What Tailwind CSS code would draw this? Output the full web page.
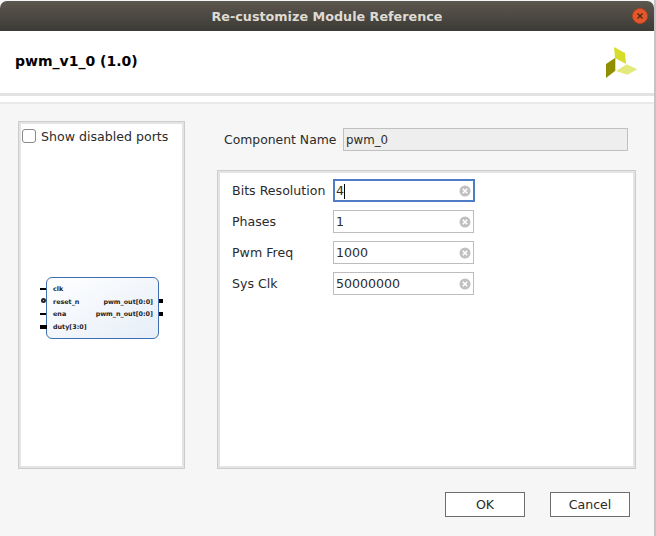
<!DOCTYPE html>
<html lang="en">
  <head>
    <meta charset="UTF-8" />
    <script src="https://cdn.jsdelivr.net/npm/@tailwindcss/browser@4"></script>
    <title>Re-customize Module Reference</title>
  </head>
  <body class="bg-white font-['DejaVu_Sans',sans-serif]">
    <div class="w-[656px] h-[536px] overflow-hidden">
      <div class="w-[656px] h-[536px] flex flex-col bg-[#f6f6f6] border-r-2 border-[#c4c4c4]">
        <!-- title bar -->
        <div class="relative h-[30px] mt-px shrink-0 rounded-t-[7px] bg-gradient-to-b from-[#5c574f] to-[#3d3b36] flex items-center justify-center">
          <span class="pt-[2px] text-[12.75px] font-bold text-[#dfdbd2]">Re-customize Module Reference</span>
          <div class="absolute right-[6px] top-[7px] w-4 h-4 rounded-full bg-[#e4572b] border border-[#b8441f] flex items-center justify-center">
            <svg width="8" height="8" viewBox="0 0 8 8"><path d="M1.5 1.5l5 5M6.5 1.5l-5 5" stroke="#4a2a1a" stroke-width="1.4"/></svg>
          </div>
        </div>

        <!-- header -->
        <div class="h-[62px] shrink-0 bg-white flex justify-between pl-[15px] pr-[14px]">
          <span class="text-[14px] font-bold text-black mt-[20px]">pwm_v1_0 (1.0)</span>
          <svg class="mt-[14px]" width="36" height="36" viewBox="604 45 36 36">
            <polygon points="614,47 625,53 626,64 615,58" fill="#d6dc2c"/>
            <polygon points="606,64 615.3,57.7 615.3,70.7 606,78" fill="#8f8f00"/>
            <polygon points="616,71 626.7,64.3 637.3,69.3 627.3,74.7" fill="#e2ea7c"/>
          </svg>
        </div>
        <div class="h-[3px] shrink-0 bg-[#e3e3e3]"></div>
        <div class="h-[6px] shrink-0 bg-white"></div>
        <div class="h-[2px] shrink-0 bg-[#e9e9e9]"></div>

        <!-- content -->
        <div class="flex-1 flex pl-[18px] pt-[17px] gap-[32px] min-h-0">
          <!-- symbol panel -->
          <div class="w-[167px] h-[348px] shrink-0 bg-white border border-[#cccccc] shadow-[inset_0_0_0_2px_#e4e4e4] flex flex-col">
            <label class="flex items-start gap-[5px] pl-[3px] pt-[6px] text-[12.6px] leading-[16px] text-[#2b2b2b]">
              <span class="w-[14px] h-[14px] mt-px bg-white border-[1.5px] border-[#8a8a8a] rounded-[3px]"></span>
              <span class="pt-px">Show disabled ports</span>
            </label>
            <div class="relative ml-[27px] mt-[132px] w-[113px] h-[62px] rounded-[6px] border border-[#3f6fb0] bg-gradient-to-br from-white to-[#e6eef8] text-[6.4px] font-bold text-[#222] leading-[7px]">
              <div class="flex justify-between h-full pt-[8px] pl-[6px] pr-[5px]">
                <div class="flex flex-col gap-[5.7px]">
                  <span>clk</span>
                  <span>reset_n</span>
                  <span>ena</span>
                  <span>duty[3:0]</span>
                </div>
                <div class="flex flex-col gap-[5.7px] pt-[12.7px] items-end">
                  <span>pwm_out[0:0]</span>
                  <span>pwm_n_out[0:0]</span>
                </div>
              </div>
              <span class="absolute left-[-7px] top-[10px] w-[6px] h-[2px] bg-black"></span>
              <span class="absolute left-[-6px] top-[20px] w-[5px] h-[5px] rounded-full border-2 border-[#222] bg-white"></span>
              <span class="absolute left-[-7px] top-[35px] w-[6px] h-[2px] bg-black"></span>
              <span class="absolute left-[-7px] top-[47px] w-[7px] h-[4px] bg-black"></span>
              <span class="absolute right-[-5px] top-[21px] w-[4px] h-[4px] bg-black"></span>
              <span class="absolute right-[-5px] top-[34px] w-[4px] h-[4px] bg-black"></span>
            </div>
          </div>

          <!-- parameters -->
          <div class="w-[419px] flex flex-col">
            <div class="flex items-center h-[23px] mt-[7px] pl-[7px] text-[12.6px] text-[#2b2b2b]">
              <span class="w-[119px] pt-[2px] text-[12.4px]">Component Name</span>
              <div class="w-[285px] h-[23px] bg-[#eeeeee] border border-[#c0c0c0] pl-[2px] flex items-center"><span class="pt-[2px] text-[11.8px]">pwm_0</span></div>
            </div>
            <div class="mt-[19px] h-[299px] bg-white border border-[#cccccc] shadow-[inset_0_0_0_2px_#e4e4e4] pl-[14px] pt-[8px] flex flex-col gap-[8px] text-[12.6px] text-[#2b2b2b]">
              <div class="flex items-center h-[23px]">
                <span class="w-[101px] pt-[2px]">Bits Resolution</span>
                <div class="w-[142px] h-[23px] border-2 border-[#4f7cc6] pl-[1px] flex items-center justify-between pr-[2px]">
                  <span class="flex items-center pt-[2px]">4<span class="w-px h-[15px] bg-black"></span></span>
                  <svg width="12" height="12" viewBox="0 0 12 12"><circle cx="6" cy="6" r="5.5" fill="#c0c0c0"/><path d="M3.8 3.8l4.4 4.4M8.2 3.8l-4.4 4.4" stroke="#fff" stroke-width="1.6"/></svg>
                </div>
              </div>
              <div class="flex items-center h-[23px]">
                <span class="w-[101px] pt-[2px]">Phases</span>
                <div class="w-[141px] h-[23px] border border-[#bdbdbd] pl-[2px] flex items-center justify-between pr-[2px]">
                  <span class="pt-[2px]">1</span>
                  <svg width="12" height="12" viewBox="0 0 12 12"><circle cx="6" cy="6" r="5.5" fill="#c0c0c0"/><path d="M3.8 3.8l4.4 4.4M8.2 3.8l-4.4 4.4" stroke="#fff" stroke-width="1.6"/></svg>
                </div>
              </div>
              <div class="flex items-center h-[23px]">
                <span class="w-[101px] pt-[2px]">Pwm Freq</span>
                <div class="w-[141px] h-[23px] border border-[#bdbdbd] pl-[2px] flex items-center justify-between pr-[2px]">
                  <span class="pt-[2px]">1000</span>
                  <svg width="12" height="12" viewBox="0 0 12 12"><circle cx="6" cy="6" r="5.5" fill="#c0c0c0"/><path d="M3.8 3.8l4.4 4.4M8.2 3.8l-4.4 4.4" stroke="#fff" stroke-width="1.6"/></svg>
                </div>
              </div>
              <div class="flex items-center h-[23px]">
                <span class="w-[101px] pt-[2px]">Sys Clk</span>
                <div class="w-[141px] h-[23px] border border-[#bdbdbd] pl-[2px] flex items-center justify-between pr-[2px]">
                  <span class="pt-[2px]">50000000</span>
                  <svg width="12" height="12" viewBox="0 0 12 12"><circle cx="6" cy="6" r="5.5" fill="#c0c0c0"/><path d="M3.8 3.8l4.4 4.4M8.2 3.8l-4.4 4.4" stroke="#fff" stroke-width="1.6"/></svg>
                </div>
              </div>
            </div>
            <div class="flex justify-end gap-[25px] mt-[23px] mr-[6px] text-[12.6px] text-[#2b2b2b]">
              <button class="w-[80px] h-[25px] pt-[2px] bg-white border border-[#6e6e6e]">OK</button>
              <button class="w-[80px] h-[25px] pt-[2px] bg-white border border-[#6e6e6e]">Cancel</button>
            </div>
          </div>
        </div>
      </div>
    </div>
  </body>
</html>
